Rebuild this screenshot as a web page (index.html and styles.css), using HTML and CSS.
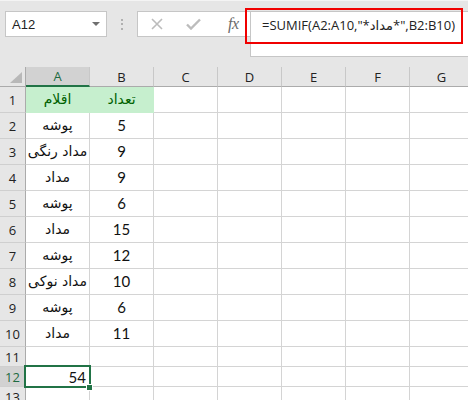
FILE: index.html
```html
<!DOCTYPE html>
<html lang="fa">
<head>
<meta charset="utf-8">
<title>SUMIF</title>
<link rel="stylesheet" href="styles.css">
</head>
<body>
<div class="app">
  <div class="toolbar">
    <div class="namebox">
      <span class="nb-text">A12</span>
      <span class="nb-arrow"></span>
    </div>
    <div class="grip"><span></span><span></span><span></span></div>
    <div class="fxbox">
      <svg class="ico" width="12" height="12" viewBox="0 0 12 12"><path d="M1 1 L11 11 M11 1 L1 11" stroke="#bcbcbc" stroke-width="1.6" fill="none"/></svg>
      <svg class="ico" width="15" height="12" viewBox="0 0 15 12"><path d="M1 6.5 L5 10.5 L14 1.5" stroke="#bcbcbc" stroke-width="2.4" fill="none"/></svg>
      <span class="fx">fx</span>
    </div>
    <div class="formula"><span class="ftext" dir="ltr">=SUMIF(A2:A10,"*مداد*",B2:B10)</span></div>
    <div class="redbox"></div>
  </div>
  <div class="sheet">
    <div class="corner"><span class="tri"></span></div>
    <div class="ch sel">A</div><div class="ch">B</div><div class="ch">C</div><div class="ch">D</div><div class="ch">E</div><div class="ch">F</div><div class="ch">G</div>

    <div class="rh">1</div><div class="c fill ar">اقلام</div><div class="c fill ar">تعداد</div><div class="c"></div><div class="c"></div><div class="c"></div><div class="c"></div><div class="c"></div>
    <div class="rh">2</div><div class="c ar">پوشه</div><div class="c">5</div><div class="c"></div><div class="c"></div><div class="c"></div><div class="c"></div><div class="c"></div>
    <div class="rh">3</div><div class="c ar">مداد رنگی</div><div class="c">9</div><div class="c"></div><div class="c"></div><div class="c"></div><div class="c"></div><div class="c"></div>
    <div class="rh">4</div><div class="c ar">مداد</div><div class="c">9</div><div class="c"></div><div class="c"></div><div class="c"></div><div class="c"></div><div class="c"></div>
    <div class="rh">5</div><div class="c ar">پوشه</div><div class="c">6</div><div class="c"></div><div class="c"></div><div class="c"></div><div class="c"></div><div class="c"></div>
    <div class="rh">6</div><div class="c ar">مداد</div><div class="c">15</div><div class="c"></div><div class="c"></div><div class="c"></div><div class="c"></div><div class="c"></div>
    <div class="rh">7</div><div class="c ar">پوشه</div><div class="c">12</div><div class="c"></div><div class="c"></div><div class="c"></div><div class="c"></div><div class="c"></div>
    <div class="rh">8</div><div class="c ar">مداد نوکی</div><div class="c">10</div><div class="c"></div><div class="c"></div><div class="c"></div><div class="c"></div><div class="c"></div>
    <div class="rh">9</div><div class="c ar">پوشه</div><div class="c">6</div><div class="c"></div><div class="c"></div><div class="c"></div><div class="c"></div><div class="c"></div>
    <div class="rh">10</div><div class="c ar">مداد</div><div class="c">11</div><div class="c"></div><div class="c"></div><div class="c"></div><div class="c"></div><div class="c"></div>
    <div class="rh">11</div><div class="c"></div><div class="c"></div><div class="c"></div><div class="c"></div><div class="c"></div><div class="c"></div><div class="c"></div>
    <div class="rh sel">12</div><div class="c right">54</div><div class="c"></div><div class="c"></div><div class="c"></div><div class="c"></div><div class="c"></div><div class="c"></div>
    <div class="rh">13</div><div class="c"></div><div class="c"></div><div class="c"></div><div class="c"></div><div class="c"></div><div class="c"></div><div class="c"></div>

    <div class="selection"><span class="handle"></span></div>
  </div>
</div>
</body>
</html>
```
FILE: styles.css
```css
html, body {
  margin: 0;
  padding: 0;
  background: #ffffff;
  overflow: hidden;
}
.app {
  width: 468px;
  height: 400px;
  overflow: hidden;
  font-family: "Liberation Sans", "DejaVu Sans", sans-serif;
}
.toolbar {
  position: relative;
  height: 67px;
  box-sizing: border-box;
  background: #e6e6e6;
  border-top: 1px solid #f4f4f4;
  display: flex;
  align-items: flex-start;
  padding: 10px 0 0 5px;
}
.namebox {
  width: 102px;
  height: 26px;
  box-sizing: border-box;
  background: #fff;
  border: 1px solid #c6c6c6;
  display: flex;
  align-items: center;
  justify-content: space-between;
  padding: 0 6px 0 6px;
}
.nb-text {
  font-size: 13px;
  color: #222;
}
.nb-arrow {
  width: 0;
  height: 0;
  border-left: 4px solid transparent;
  border-right: 4px solid transparent;
  border-top: 4px solid #6f6f6f;
}
.grip {
  width: 30px;
  height: 26px;
  display: flex;
  flex-direction: column;
  align-items: center;
  justify-content: center;
  gap: 2.5px;
}
.grip span {
  width: 2px;
  height: 2px;
  background: #b0b0b0;
}
.fxbox {
  width: 113px;
  height: 26px;
  box-sizing: border-box;
  background: #fff;
  border: 1px solid #c6c6c6;
  border-right: none;
  display: flex;
  align-items: center;
  padding-left: 13px;
  gap: 24px;
}
.fxbox .ico {
  display: block;
}
.fxbox .ico + .ico {
  margin-left: -1px;
}
.fx {
  font-family: "Liberation Serif", serif;
  font-style: italic;
  font-size: 16px;
  color: #6a6a6a;
  margin-left: 3px;
  letter-spacing: -0.5px;
}
.formula {
  flex: 1;
  height: 46px;
  box-sizing: border-box;
  background: #fff;
  border: 1px solid #c6c6c6;
  border-right: none;
  padding: 4px 0 0 11px;
}
.ftext {
  font-family: "Open Sans", "DejaVu Sans", sans-serif;
  font-size: 13px;
  color: #222;
  white-space: nowrap;
  unicode-bidi: isolate;
}
.redbox {
  position: absolute;
  left: 245px;
  top: 7px;
  width: 218px;
  height: 36px;
  box-sizing: border-box;
  border: 2px solid #f00000;
}
.sheet {
  position: relative;
  display: grid;
  grid-template-columns: 26px repeat(7, 64px);
  grid-template-rows: 20px repeat(10, 26px) repeat(3, 20px);
}
.corner {
  background: #e6e6e6;
  border-right: 1px solid #ababab;
  border-bottom: 1px solid #ababab;
  position: relative;
}
.tri {
  position: absolute;
  right: 3px;
  bottom: 3px;
  width: 0;
  height: 0;
  border-left: 12px solid transparent;
  border-bottom: 11px solid #b8b8b8;
}
.ch {
  background: #e6e6e6;
  border-right: 1px solid #c8c8c8;
  border-bottom: 1px solid #ababab;
  display: flex;
  align-items: center;
  justify-content: center;
  font-family: "Open Sans", sans-serif;
  font-size: 13px;
  color: #222;
}
.ch.sel {
  background: #d2d2d2;
  border-bottom: 2px solid #217346;
  color: #1e6b41;
}
.rh {
  background: #e6e6e6;
  border-right: 1px solid #ababab;
  border-bottom: 1px solid #cfcfcf;
  display: flex;
  align-items: center;
  justify-content: center;
  font-family: "Open Sans", sans-serif;
  font-size: 13px;
  color: #222;
}
.rh.sel {
  background: #d2d2d2;
  color: #1e6b41;
}
.c {
  border-right: 1px solid #d4d4d4;
  border-bottom: 1px solid #d4d4d4;
  display: flex;
  align-items: center;
  justify-content: center;
  font-family: "Lato", "DejaVu Sans", sans-serif;
  font-size: 15px;
  line-height: 16px;
  padding-bottom: 2px;
  color: #111;
  white-space: nowrap;
  background: #fff;
}
.c.ar {
  direction: rtl;
  font-family: "DejaVu Sans", sans-serif;
  font-size: 14px;
}
.c.fill {
  background: #c6efce;
  border-color: #c6efce;
  color: #006100;
}
.c.right {
  justify-content: flex-end;
  padding-right: 3px;
  padding-bottom: 0;
}
.selection {
  position: absolute;
  left: 24px;
  top: 298px;
  width: 67px;
  height: 23px;
  box-sizing: border-box;
  border: 2px solid #217346;
}
.handle {
  position: absolute;
  right: -4px;
  bottom: -5px;
  width: 7px;
  height: 7px;
  box-sizing: border-box;
  background: #217346;
  border: 1px solid #fff;
}
```
